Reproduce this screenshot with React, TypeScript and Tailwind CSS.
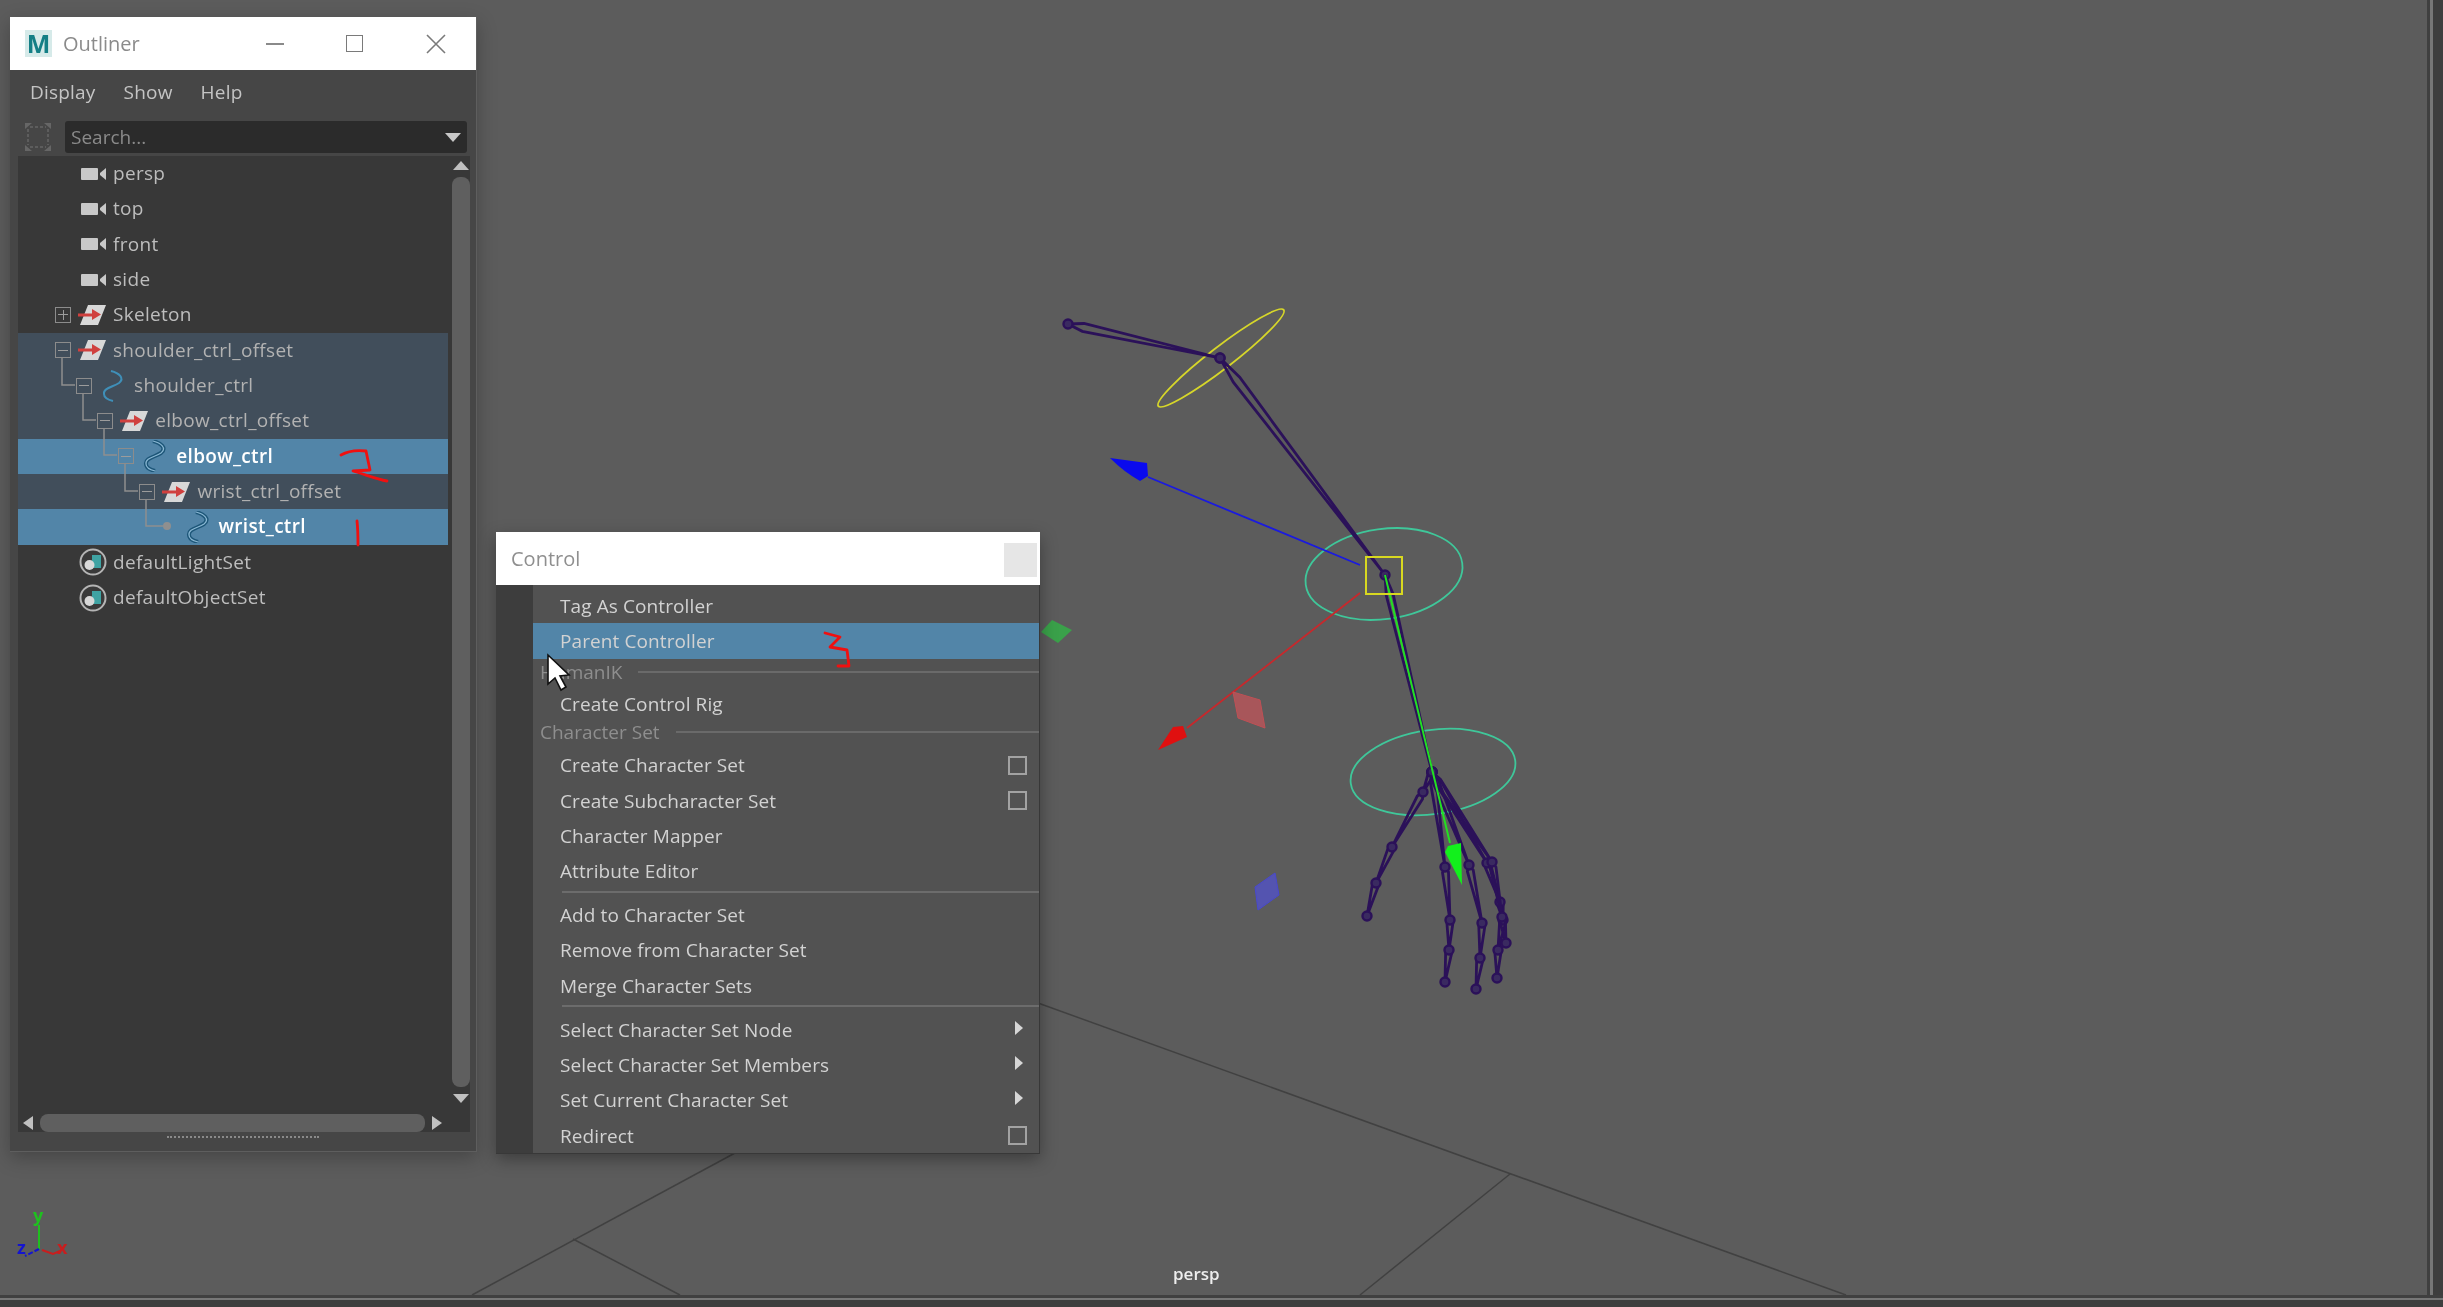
type Pt = [number, number];

const treeRows = [
  { label: "persp", depth: 0, kind: "camera" },
  { label: "top", depth: 0, kind: "camera" },
  { label: "front", depth: 0, kind: "camera" },
  { label: "side", depth: 0, kind: "camera" },
  { label: "Skeleton", depth: 0, kind: "group", toggle: "plus" },
  { label: "shoulder_ctrl_offset", depth: 0, kind: "group", toggle: "minus", sel: "dim" },
  { label: "shoulder_ctrl", depth: 1, kind: "curve", toggle: "minus", sel: "dim" },
  { label: "elbow_ctrl_offset", depth: 2, kind: "group", toggle: "minus", sel: "dim" },
  { label: "elbow_ctrl", depth: 3, kind: "curve", toggle: "minus", sel: "full" },
  { label: "wrist_ctrl_offset", depth: 4, kind: "group", toggle: "minus", sel: "dim" },
  { label: "wrist_ctrl", depth: 5, kind: "curve", sel: "full" },
  { label: "defaultLightSet", depth: 0, kind: "set" },
  { label: "defaultObjectSet", depth: 0, kind: "set" },
];

function CameraIcon() {
  return (
    <svg width="26" height="14" viewBox="0 0 26 14" className="shrink-0 ml-[7px]">
      <rect x="0" y="1" width="17" height="12" rx="1" fill="#c8c8c8" />
      <path d="M19 6 L25 1 V13 L19 8 Z" fill="#c8c8c8" />
    </svg>
  );
}

function GroupIcon() {
  return (
    <svg width="30" height="22" viewBox="0 0 30 22" className="shrink-0 ml-[4px]">
      <path d="M10 1 H28 L20 21 H2 Z" fill="#d8d8d8" />
      <path d="M0 9.5 H14 V5 L23 10.5 L14 16 V12.5 H0 Z" fill="#d0403e" />
    </svg>
  );
}

function CurveIcon({ bright }: { bright?: boolean }) {
  const d = "M10 1 C18 3 24 8 18 13 C12 17 2 18 3 24 C3 28 8 30 12 31";
  return (
    <svg width="24" height="32" viewBox="0 0 24 32" className="shrink-0 ml-[6px]">
      {bright ? (
        <>
          <path d={d} fill="none" stroke="#1d5678" strokeWidth="4" />
          <path d={d} fill="none" stroke="#8ab8d4" strokeWidth="1.2" />
        </>
      ) : (
        <path d={d} fill="none" stroke="#3f8fb8" strokeWidth="2" />
      )}
    </svg>
  );
}

function SetIcon() {
  return (
    <svg width="28" height="28" viewBox="0 0 28 28" className="shrink-0 ml-[5px]">
      <circle cx="14" cy="14" r="12.5" fill="#3a3a3a" stroke="#b5b5b5" strokeWidth="2" />
      <rect x="13" y="7" width="9" height="13" fill="#3fa3a3" />
      <circle cx="10.5" cy="17" r="5" fill="#d8d8d8" />
    </svg>
  );
}

function TreeToggle({ type }: { type?: string }) {
  if (!type) return <span className="w-[16px] h-[16px] shrink-0" />;
  return (
    <span className="relative w-[16px] h-[16px] shrink-0 border border-[#8c8c8c] flex items-center justify-center">
      <span className="w-[10px] h-[1px] bg-[#9c9c9c]" />
      {type === "plus" && <span className="absolute w-[1px] h-[10px] bg-[#9c9c9c]" />}
    </span>
  );
}

function TreeRow({ row }: { row: (typeof treeRows)[number] }) {
  const bg =
    row.sel === "full" ? "bg-[#5285a8]" : row.sel === "dim" ? "bg-[#414e5b]" : "";
  const text =
    row.sel === "full" ? "text-white font-semibold" : row.sel === "dim" ? "text-[#b2b2b2]" : "text-[#bdbdbd]";
  return (
    <div
      className={`h-[35.33px] w-[430px] flex items-center ${bg}`}
      style={{ paddingLeft: 37 + row.depth * 21.1 }}
    >
      <TreeToggle type={row.toggle} />
      <span className="w-[6px] shrink-0" />
      <span className="w-[36px] shrink-0 -ml-[3px] mr-[3px] flex items-center">
        {row.kind === "camera" && <CameraIcon />}
        {row.kind === "group" && <GroupIcon />}
        {row.kind === "curve" && <CurveIcon bright={row.sel === "full"} />}
        {row.kind === "set" && <SetIcon />}
      </span>
      <span className={`-mt-[1px] text-[19px] tracking-[0.3px] whitespace-nowrap ${text}`}>{row.label}</span>
    </div>
  );
}

function Outliner() {
  return (
    <div className="absolute left-[10px] top-[17px] w-[467px] h-[1135px] bg-[#464646] flex flex-col shadow-[0_6px_18px_rgba(0,0,0,0.25)] border-r border-b border-[#5e5e5e]">
      <div className="h-[53px] bg-white flex items-center shrink-0">
        <div className="ml-[15px] w-[27px] h-[27px] bg-[#d6eae9] flex items-center justify-center">
          <span className="text-[#147f86] text-[25px] leading-none font-bold">M</span>
        </div>
        <span className="ml-[11px] text-[20px] text-[#8b8b8b]">Outliner</span>
        <div className="ml-auto flex items-center">
          <span className="w-[18px] h-[2px] bg-[#8a8a8a]" />
          <span className="ml-[62px] w-[17px] h-[17px] border-[1.5px] border-[#7a7a7a]" />
          <svg width="20" height="20" viewBox="0 0 20 20" className="ml-[63px] mr-[30px]">
            <path d="M1 1 L19 19 M19 1 L1 19" stroke="#7a7a7a" strokeWidth="1.6" />
          </svg>
        </div>
      </div>
      <div className="h-[51px] pb-[7px] flex items-center gap-[28px] pl-[20px] text-[19px] tracking-[0.2px] text-[#c4c4c4] shrink-0">
        <span>Display</span>
        <span>Show</span>
        <span>Help</span>
      </div>
      <div className="h-[32px] flex items-center shrink-0">
        <svg width="28" height="30" viewBox="0 0 28 30" className="ml-[14px] shrink-0">
          <path d="M6 5 H22 M6 25 H22 M4 7 V23 M24 7 V23" stroke="#5d5d5d" strokeWidth="2" strokeDasharray="3 2" fill="none" />
          <path d="M1 1 L8 1 L1 7 Z M27 1 L20 1 L27 7 Z M1 29 L8 29 L1 23 Z M27 29 L20 29 L27 23 Z" fill="#666" />
        </svg>
        <div className="ml-[13px] w-[402px] h-[32px] bg-[#2b2b2b] rounded-[3px] flex items-center pl-[6px] pr-[6px]">
          <span className="text-[19px] text-[#8a8a8a]">Search...</span>
          <span className="ml-auto w-0 h-0 border-l-[8px] border-r-[8px] border-t-[9px] border-l-transparent border-r-transparent border-t-[#c8c8c8]" />
        </div>
      </div>
      <div className="relative mt-[3px] ml-[8px] w-[452px] h-[976px] bg-[#383838] overflow-hidden">
        <div className="flex flex-col">
          {treeRows.map((row) => (
            <TreeRow key={row.label} row={row} />
          ))}
        </div>
        <svg className="absolute left-0 top-0" width="230" height="400" fill="none" stroke="#8f8f8f" strokeWidth="1.5">
          <path d="M44 202 V229 H57 M65 238 V264 H78 M86 273 V299 H99 M107 308 V335 H120 M128 344 V370 H145" />
          <circle cx="149" cy="370" r="4" fill="#8f8f8f" stroke="none" />
        </svg>
        <div className="absolute right-0 top-0 bottom-0 w-[18px] flex flex-col items-center">
          <span className="mt-[5px] w-0 h-0 border-l-[8px] border-r-[8px] border-b-[9px] border-l-transparent border-r-transparent border-b-[#c0c0c0]" />
          <span className="mt-[7px] w-[18px] h-[910px] rounded-[8px] bg-[#5f5f5f] shrink-0" />
          <span className="mt-[7px] w-0 h-0 border-l-[8px] border-r-[8px] border-t-[9px] border-l-transparent border-r-transparent border-t-[#c0c0c0]" />
        </div>
        <div className="absolute left-0 bottom-0 h-[18px] w-[430px] flex items-center">
          <span className="ml-[5px] w-0 h-0 border-t-[7px] border-b-[7px] border-r-[10px] border-t-transparent border-b-transparent border-r-[#c0c0c0]" />
          <span className="ml-[7px] w-[385px] h-[18px] rounded-[8px] bg-[#5f5f5f]" />
          <span className="ml-[7px] w-0 h-0 border-t-[7px] border-b-[7px] border-l-[10px] border-t-transparent border-b-transparent border-l-[#c0c0c0]" />
        </div>
      </div>
      <div className="mt-[4px] ml-[157px] w-[152px] h-[2px] border-t-2 border-dotted border-[#8a8a8a]" />
    </div>
  );
}

function MenuRow({ label, active, box, arrow }: { label: string; active?: boolean; box?: boolean; arrow?: boolean }) {
  return (
    <div className={`h-[35.3px] flex items-center pl-[27px] pr-[12px] ${active ? "bg-[#5285a8]" : ""}`}>
      <span className="mt-[1px] text-[19px] tracking-[0.1px] text-[#d2d2d2] whitespace-nowrap">{label}</span>
      {box && <span className="ml-auto w-[19px] h-[19px] border-2 border-[#a2a2a2]" />}
      {arrow && (
        <span className="ml-auto mr-[4px] -mt-[4px] w-0 h-0 border-t-[7px] border-b-[7px] border-l-[8px] border-t-transparent border-b-transparent border-l-[#d6d6d6]" />
      )}
    </div>
  );
}

function MenuHeading({ label, h }: { label: string; h: string }) {
  return (
    <div className={`${h} flex items-center pl-[7px] gap-[16px]`}>
      <span className="text-[19px] text-[#8e8e8e] whitespace-nowrap">{label}</span>
      <span className="flex-1 h-[2px] bg-[#6a6a6a]" />
    </div>
  );
}

function MenuSep({ className }: { className: string }) {
  return (
    <div className={`${className} pl-[29px]`}>
      <div className="h-[2px] bg-[#6c6c6c]" />
    </div>
  );
}

function ControlMenu() {
  return (
    <div className="absolute left-[496px] top-[532px] w-[544px] h-[621px] flex flex-col shadow-[0_6px_16px_rgba(0,0,0,0.35)]">
      <div className="h-[53px] shrink-0 bg-white flex items-center pl-[15px] pr-[3px]">
        <span className="text-[20px] text-[#8f8f8f]">Control</span>
        <span className="ml-auto mt-[2px] w-[33px] h-[34px] bg-[#e6e6e6]" />
      </div>
      <div className="flex-1 flex border-r border-b border-[#383838]">
        <div className="w-[37px] bg-[#3d3d3d] shrink-0" />
        <div className="flex-1 bg-[#525252] pt-[3px] min-w-0">
          <MenuRow label="Tag As Controller" />
          <MenuRow label="Parent Controller" active />
          <MenuHeading label="HumanIK" h="h-[27.5px]" />
          <MenuRow label="Create Control Rig" />
          <MenuHeading label="Character Set" h="h-[26px] pb-[4px]" />
          <MenuRow label="Create Character Set" box />
          <MenuRow label="Create Subcharacter Set" box />
          <MenuRow label="Character Mapper" />
          <MenuRow label="Attribute Editor" />
          <MenuSep className="h-[8.5px] pt-[2px]" />
          <MenuRow label="Add to Character Set" />
          <MenuRow label="Remove from Character Set" />
          <MenuRow label="Merge Character Sets" />
          <MenuSep className="h-[9px] pt-[2px]" />
          <MenuRow label="Select Character Set Node" arrow />
          <MenuRow label="Select Character Set Members" arrow />
          <MenuRow label="Set Current Character Set" arrow />
          <MenuRow label="Redirect" box />
        </div>
      </div>
    </div>
  );
}

// one skeleton bone: a long thin diamond with outlined sides
function Bone({ from, to, w = 3 }: { from: Pt; to: Pt; w?: number }) {
  const dx = to[0] - from[0];
  const dy = to[1] - from[1];
  const len = Math.hypot(dx, dy) || 1;
  const nx = (-dy / len) * w;
  const ny = (dx / len) * w;
  const mx = from[0] + dx * 0.1;
  const my = from[1] + dy * 0.1;
  const pts = `${from[0]},${from[1]} ${mx + nx},${my + ny} ${to[0]},${to[1]} ${mx - nx},${my - ny}`;
  return <polygon points={pts} fill="none" stroke="#2b1159" strokeWidth="2.8" />;
}

function Chain({ pts, w }: { pts: Pt[]; w?: number }) {
  return (
    <g>
      {pts.slice(0, -1).map((p, i) => (
        <Bone key={i} from={p} to={pts[i + 1]} w={w} />
      ))}
      {pts.map((p, i) => (
        <circle key={i} cx={p[0]} cy={p[1]} r="4.5" fill="#3a2a60" stroke="#2b1159" strokeWidth="2.4" />
      ))}
    </g>
  );
}

function Scene() {
  return (
    <svg className="absolute left-0 top-0" width="2443" height="1307" viewBox="0 0 2443 1307" fill="none">
      {/* grid */}
      <g stroke="#414141" strokeWidth="1.5">
        <path d="M1038 1003 L1846 1295" />
        <path d="M1510 1174 L1360 1295" />
        <path d="M735 1153 L472 1295" />
        <path d="M573 1239 L680 1295" />
      </g>

      {/* rig */}
      <ellipse cx="1221" cy="358" rx="79" ry="11" transform="rotate(-37.5 1221 358)" stroke="#d6d62a" strokeWidth="1.8" />
      <ellipse cx="1384" cy="574" rx="79" ry="45" transform="rotate(-8 1384 574)" stroke="#3fc79a" strokeWidth="1.8" />
      <ellipse cx="1433" cy="772" rx="83" ry="42" transform="rotate(-8 1433 772)" stroke="#3fc79a" strokeWidth="1.8" />
      <Chain pts={[[1068, 324], [1220, 358]]} w={4} />
      <Chain pts={[[1220, 358], [1385, 575]]} w={4} />
      <Bone from={[1385, 575]} to={[1432, 772]} w={3.5} />
      <Chain pts={[[1432, 772], [1423, 792], [1392, 847], [1376, 883], [1367, 916]]} w={3} />
      <Chain pts={[[1432, 772], [1445, 867], [1450, 920], [1449, 950], [1445, 982]]} w={3} />
      <Chain pts={[[1432, 772], [1469, 865], [1482, 923], [1480, 958], [1476, 989]]} w={3} />
      <Chain pts={[[1432, 772], [1487, 863], [1500, 902], [1503, 920], [1498, 950], [1497, 978]]} w={3} />
      <Chain pts={[[1432, 772], [1492, 862], [1502, 917], [1506, 943]]} w={3} />

      {/* manipulator */}
      <path d="M1360 565 L1148 477" stroke="#1a1ae0" strokeWidth="1.8" />
      <path d="M1110 458 L1147 463 L1148 476 L1140 481 Q1124 472 1110 458 Z" fill="#0a0aee" />
      <path d="M1360 593 L1187 728" stroke="#c8282c" strokeWidth="1.8" />
      <path d="M1158 750 L1173 727 L1183 726 L1187 737 Z" fill="#e01010" />
      <path d="M1385 575 L1450 843" stroke="#22e022" strokeWidth="2" />
      <path d="M1462 885 L1445 852 L1448 846 L1461 843 Z" fill="#12f01c" />
      <path d="M1233 692 L1260 700 L1265 728 L1238 718 Z" fill="#a8565a" stroke="#c05055" />
      <path d="M1275 873 L1279 895 L1258 910 L1255 887 Z" fill="#5454b0" stroke="#4848d0" />
      <path d="M1041 632 L1052 620 L1072 630 L1058 643 Z" fill="#3aa14a" />
      <rect x="1366" y="557" width="36" height="37" stroke="#d8d820" strokeWidth="2" />

      {/* axis */}
      <path d="M39 1225 V1249" stroke="#1fc01f" strokeWidth="2" />
      <path d="M39 1249 L25 1256" stroke="#1414d0" strokeWidth="2" strokeDasharray="5 2" />
      <path d="M42 1250 L53 1254 L60 1251" stroke="#c81e1e" strokeWidth="2" />
    </svg>
  );
}

// red pen marks and the mouse pointer sit above both windows
function Annotations() {
  return (
    <svg className="absolute left-0 top-0" width="2443" height="1307" viewBox="0 0 2443 1307" fill="none">
      <g stroke="#f01010" strokeWidth="2.8" strokeLinecap="round" strokeLinejoin="round">
        <path d="M341 455 C348 451 358 450 366 451 L370 470 L353 471 C364 474 376 479 387 481" />
        <path d="M357 521 C358 530 358 538 358 545" />
        <path d="M825 633 L840 637 L830 647 L847 650 L849 666 L838 666" />
      </g>
      <path
        d="M548 655 L548 684 L555 678 L561 690 L566 687 L560 676 L569 675 Z"
        fill="#fff"
        stroke="#111"
        strokeWidth="1.6"
      />
    </svg>
  );
}

export default function App() {
  return (
    <div className="relative w-[2443px] h-[1307px] overflow-hidden bg-[#3c3c3c] flex flex-col font-['Open_Sans',sans-serif] blur-[0.5px]">
      <div className="flex-1 flex min-h-0">
        <div className="flex-1 bg-[#5c5c5c]" />
        <div className="w-[16px] shrink-0 flex">
          <div className="w-[3px] bg-[#404040]" />
          <div className="w-[3px] bg-[#777]" />
          <div className="flex-1 bg-[#3e3e3e]" />
        </div>
      </div>
      <div className="h-[12px] shrink-0 flex flex-col">
        <div className="h-[3px] bg-[#404040]" />
        <div className="h-[2px] bg-[#777]" />
        <div className="flex-1 bg-[#3e3e3e]" />
      </div>

      <Scene />
      <span className="absolute left-[33px] top-[1206px] text-[18px] leading-none font-bold text-[#1fc01f]">y</span>
      <span className="absolute left-[17px] top-[1238px] text-[18px] leading-none font-bold text-[#1414d0]">z</span>
      <span className="absolute left-[57px] top-[1238px] text-[18px] leading-none font-bold text-[#c81e1e]">x</span>
      <span className="absolute left-[1173px] top-[1262px] text-[17px] leading-[24px] font-semibold text-[#eeeeee]">persp</span>
      <Outliner />
      <ControlMenu />
      <Annotations />
    </div>
  );
}
